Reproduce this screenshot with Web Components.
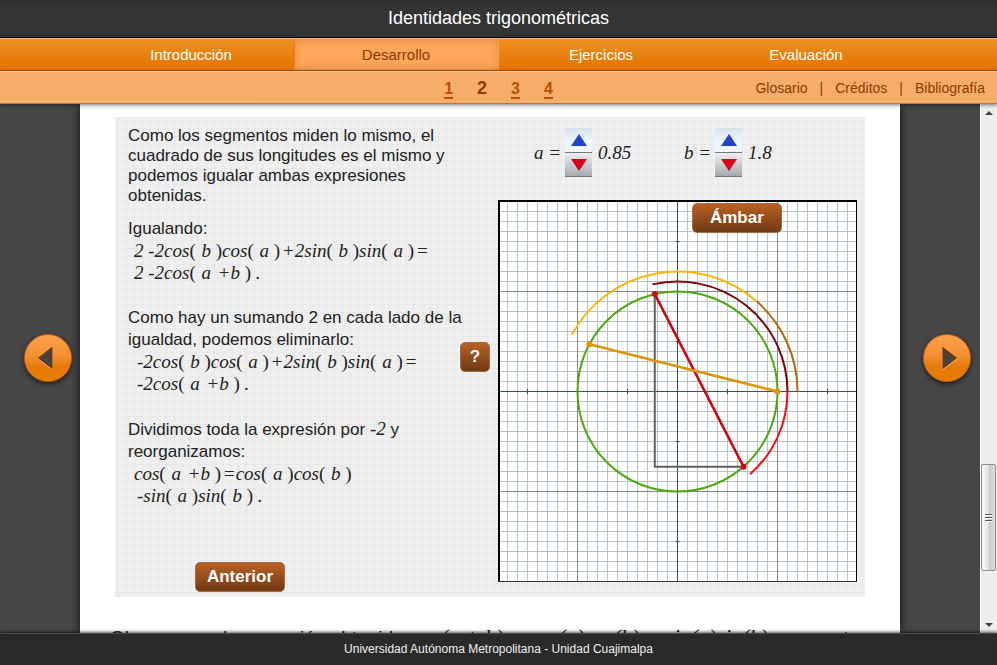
<!DOCTYPE html>
<html lang="es">
<head>
<meta charset="utf-8">
<title>Identidades trigonométricas</title>
<style>
html, body { height: 100%; margin: 0; }
body { font-family: "Liberation Sans", Arial, sans-serif; font-size: 17px; color: #222; overflow: hidden; }
</style>
</head>
<body>
<lesson-app>
  <top-title slot="head">Identidades trigonométricas</top-title>
  <main-nav slot="head"></main-nav>
  <sub-nav slot="head"></sub-nav>
  <turn-button slot="prev" direction="prev"></turn-button>
  <turn-button slot="next" direction="next"></turn-button>
  <lesson-scene></lesson-scene>
  <closing-line></closing-line>
  <side-scroll slot="scroll"></side-scroll>
  <page-footer slot="foot">Universidad Autónoma Metropolitana - Unidad Cuajimalpa</page-footer>
</lesson-app>

<script>
const define = (name, html, setup) => {
  const tpl = document.createElement('template');
  tpl.innerHTML = '<style>:host,*{box-sizing:border-box}</style>' + html.trim();
  customElements.define(name, class extends HTMLElement {
    constructor() {
      super();
      this.attachShadow({ mode: 'open' }).append(tpl.content.cloneNode(true));
    }
    connectedCallback() { if (setup) setup(this, this.shadowRoot); }
  });
};

define('top-title', `
<style>
:host { display: block; background: linear-gradient(#2d2d2d, #343434 20%, #333); border-bottom: 1px solid #000; padding: 7px 0 8px; text-align: center; }
h1 { margin: 0; font-size: 18px; line-height: 22px; font-weight: 400; color: #fff; }
</style>
<h1><slot></slot></h1>`);

define('main-nav', `
<style>
:host { display: block; background: linear-gradient(#f09020, #e6800f 55%, #e87400); border-top: 1px solid #ffb46a; border-bottom: 1px solid #b85000; }
nav { max-width: 820px; margin: 0 auto; display: flex; }
a { flex: 1; text-align: center; color: #fff; text-decoration: none; font-size: 15px; line-height: 31px; }
a[aria-current] { color: #8e3b00; background: #fca75c; box-shadow: inset 0 0 10px #e8883a, inset 1px 0 #e07a10, inset -1px 0 #ffc080; }
</style>
<nav><a href="#intro">Introducción</a><a href="#desarrollo" aria-current="page">Desarrollo</a><a href="#ejercicios">Ejercicios</a><a href="#evaluacion">Evaluación</a></nav>`);

define('sub-nav', `
<style>
:host { display: grid; grid-template-columns: 1fr auto 1fr; align-items: center; height: 33px; padding: 0 12px;
  background: repeating-linear-gradient(90deg, #f3aa6808 0 2px, #e08a3c10 2px 4px), #f6ae6d;
  border-top: 1px solid #ffc793; border-bottom: 1px solid #b87a44; box-shadow: 0 1px 4px #0008; position: relative; z-index: 1; }
.pages { grid-column: 2; display: flex; gap: 24px; align-items: baseline; font-weight: 700; font-size: 16px; padding-top: 3px; }
.pages a { color: #bd5000; text-decoration: none; line-height: 17px; border-bottom: 2px solid #bd5000; }
.pages a[aria-current] { color: #8e3b00; font-size: 18px; border: 0; }
.links { justify-self: end; display: flex; gap: 12px; font-size: 14px; line-height: 18px; color: #8e3b00; }
.links a { color: #8e3b00; text-decoration: none; }
</style>
<nav class="pages"><a href="#1">1</a><a href="#2" aria-current="page">2</a><a href="#3">3</a><a href="#4">4</a></nav>
<nav class="links"><a href="#glosario">Glosario</a><span>|</span><a href="#creditos">Créditos</a><span>|</span><a href="#bibliografia">Bibliografía</a></nav>`);

define('page-footer', `
<style>
:host { display: block; background: #2a2a2a; border-top: 1px solid #4a4a4a; box-shadow: 0 -1px 3px #000a; position: relative; z-index: 1;
  text-align: center; font-size: 12px; line-height: 31px; color: #eee; }
</style>
<footer><slot></slot></footer>`);

define('turn-button', `
<style>
:host { display: block; }
button { display: grid; place-items: center; width: 48px; height: 48px; padding: 0; border: 1px solid #c06010; border-radius: 50%;
  background: linear-gradient(#ffa04c, #f39032 45%, #e67a08 70%, #ea7c00); box-shadow: 0 2px 4px #0009; }
svg { display: block; filter: drop-shadow(0 1px 0 #ffb060); }
:host([direction="next"]) svg { transform: scaleX(-1); }
</style>
<button type="button"><svg width="24" height="24" viewBox="0 0 24 24"><path d="M2.500 12 16 1.500V22.500Z" fill="#4a4238" stroke="#6b3a0c"/></svg></button>`,
(host, root) => root.querySelector('button').setAttribute('aria-label', host.getAttribute('direction') === 'prev' ? 'Página anterior' : 'Página siguiente'));

define('side-scroll', `
<style>
:host { display: block; width: 17px; background: #eee; border-left: 1px solid #fff; }
div.bar { height: 100%; display: grid; grid-template-rows: 17px 343fr 107fr 45fr 17px; }
.up, .down { place-self: center; border: 4px solid transparent; border-top: 0; border-bottom: 4px solid #444; }
.down { grid-row: 5; border-top: 4px solid #444; border-bottom: 0; }
.thumb { grid-row: 3; border: 1px solid #8c8c8c; border-radius: 2px; margin-right: 1px; background: linear-gradient(90deg, #f8f8f8, #e6e6e8 45%, #c8c8d0 55%, #dcdce2); display: grid; place-items: center; }
.grip { width: 7px; height: 8px; background: repeating-linear-gradient(#555 0 1px, #fff 1px 2px, transparent 2px 3px); }
</style>
<div class="bar"><span class="up"></span><div class="thumb"><span class="grip"></span></div><span class="down"></span></div>`);

define('brown-button', `
<style>
:host { display: inline-block; }
button { display: block; min-width: 30px; width: 100%; height: 30px; padding: 0; border: 1px solid #a86a42; border-radius: 5px;
  background: linear-gradient(#b96024, #703a14); color: #fff; font: 700 17px/26px "Liberation Sans", Arial, sans-serif; }
</style>
<button type="button"><slot></slot></button>`);

define('math-text', `
<style>
:host { font: italic 19px/22px "Liberation Serif", "Times New Roman", serif; white-space: pre; }
b { font-weight: inherit; }
span { font-style: normal; }
span.open { margin-right: 1px; }
span.op { margin: 0 1px 0 3px; }
</style><b></b>`,
(host, root) => {
  root.querySelector('b').replaceChildren(...(host.getAttribute('value') || '').split(/([()+=])/).filter(Boolean).map(part => {
    if (!/^[()+=]$/.test(part)) return document.createTextNode(part);
    const s = document.createElement('span');
    s.textContent = part;
    if (/[+=]/.test(part)) s.className = 'op';
    if (part === '(') s.className = 'open';
    return s;
  }));
});

define('value-spinner', `
<style>
:host { display: flex; align-items: center; width: 150px; font: italic 19px/22px "Liberation Serif", serif; }
.box { width: 27px; margin: 0 6px 0 4px; }
button { display: grid; place-items: center; width: 100%; height: 25px; border: 0; border-bottom: 1px solid #777; padding: 0; background: linear-gradient(#dbe2ec, #f0f6ff 60%); }
.dn { height: 24px; background: linear-gradient(#eeeef2, #a6aaae); }
svg { display: block; }
.name { width: 27px; white-space: nowrap; }
</style>
<span class="name"></span>
<div class="box">
<button type="button" class="up"><svg width="16" height="12" viewBox="0 0 16 12"><path d="M8 0 16 12H0Z" fill="#2244cc"/></svg></button>
<button type="button" class="dn"><svg width="16" height="12" viewBox="0 0 16 12"><path d="M8 12 16 0H0Z" fill="#d8001c"/></svg></button>
</div><output></output>`,
(host, root) => {
  const n = host.getAttribute('name');
  root.querySelector('.name').textContent = n + ' =';
  root.querySelector('output').textContent = host.getAttribute('value');
  root.querySelector('.up').setAttribute('aria-label', 'Aumentar ' + n);
  root.querySelector('.dn').setAttribute('aria-label', 'Disminuir ' + n);
});

define('circle-plot', `
<style>
:host { display: block; position: relative; }
svg { display: block; width: 100%; height: auto; }
::slotted(brown-button) { position: absolute; left: 54%; top: 3px; width: 90px; }
</style>
<svg viewBox="0 0 359 382" role="img" aria-label="Círculo unitario"></svg><slot></slot>`,
(host, root) => {
  const a = +host.getAttribute('a'), b = +host.getAttribute('b');
  const cx = 179.5, cy = 191.5;
  const pt = (r, t) => (cx + r * Math.cos(t)).toFixed(2) + ' ' + (cy - r * Math.sin(t)).toFixed(2);
  const arc = (r, from, to, color) => `<path d="M${pt(r, from)}A${r} ${r} 0 0 ${to > from ? 0 : 1} ${pt(r, to)}" fill="none" stroke="${color}" stroke-width="2"/>`;
  const dot = (t, color) => { const [x, y] = pt(100, t).split(' '); return `<circle cx="${x}" cy="${y}" r="3" fill="${color}"/>`; };
  let s = '<rect width="359" height="382" fill="#fff"/>';
  const line = (d, c) => `<path d="${d}" stroke="${c}" fill="none"/>`;
  let minor = '', major = '', axis = `M${cx} 0V382M0 ${cy}H359`;
  for (let k = -19; k <= 19; k++) {
    if (!k) continue;
    const x = cx + 10 * k, y = cy + 10 * k, big = k % 10 === 0;
    if (x > 0 && x < 359) { const d = `M${x} 0V382`; big ? major += d : minor += d; }
    const d = `M0 ${y}H359`;
    big ? major += d : minor += d;
    if (k % 5 === 0) axis += `M${x} ${cy - 2.5}v5M${cx - 2} ${y}h4`;
  }
  s += line(minor, '#b6c2c5') + line(major, '#7e8a8c') + line(axis, '#3c5058');
  s += `<circle cx="${cx}" cy="${cy}" r="100" fill="none" stroke="#4ca80c" stroke-width="2"/>`;
  s += arc(120, 0, a, '#b4690c') + arc(120, a, a + b, '#ffb40c') + arc(110, 0, b, '#80000a') + arc(110, 0, -a, '#ff0a0a');
  s += dot(b, '#d4000c') + dot(-a, '#d4000c');
  const x1 = cx + 100 * Math.cos(b), y2 = cy + 100 * Math.sin(a);
  s += `<path d="M${pt(100, b)}L${x1} ${y2}L${pt(100, -a)}" fill="none" stroke="#606060" stroke-width="2"/>`;
  s += `<path d="M${pt(100, b)}L${pt(100, -a)}" stroke="#d4000c" stroke-width="2.500"/>`;
  s += `<path d="M${pt(100, 0)}L${pt(100, a + b)}" stroke="#dc9408" stroke-width="2.500"/>` + dot(0, '#dc9408') + dot(a + b, '#dc9408');
  s += '<path d="M0 1H359M1 0V382" stroke="#000" stroke-width="2"/><path d="M358.500 0V382" stroke="#000"/><path d="M0 381.500H359" stroke="#333"/>';
  root.querySelector('svg').innerHTML = s;
});

define('lesson-scene', `
<style>
:host { display: grid; grid-template-columns: minmax(0, 1fr) 30px 359px; gap: 8px; padding: 8px 8px 15px 13px;
  background: repeating-linear-gradient(90deg, #0000 0 3px, #00000006 3px 4px, #0000 4px 7px, #ffffff30 7px 8px), repeating-linear-gradient(#0000 0 3px, #00000006 3px 4px, #0000 4px 8px), #eee; }
.text { display: flex; flex-direction: column; }
p { margin: 0 0 23px; line-height: 22px; white-space: nowrap; }
p.first { line-height: 20px; margin-bottom: 12px; padding-top: 1px; }
math-text.line { display: block; padding-left: 6px; }
math-text.neg { padding-left: 9px; }
.back { width: 90px; margin: auto 0 -10px 67px; }
.help { align-self: center; margin-top: 6px; }
.controls { display: flex; padding: 3px 0 23px 36px; }
</style>
<div class="text">
<p class="first">Como los segmentos miden lo mismo, el<br>cuadrado de sus longitudes es el mismo y<br>podemos igualar ambas expresiones<br>obtenidas.</p>
<p>Igualando:<math-text class="line" value="2 -2cos( b )cos( a )+2sin( b )sin( a )="></math-text><math-text class="line" value="2 -2cos( a +b ) ."></math-text></p>
<p>Como hay un sumando 2 en cada lado de la<br>igualdad, podemos eliminarlo:<math-text class="line neg" value="-2cos( b )cos( a )+2sin( b )sin( a )="></math-text><math-text class="line neg" value="-2cos( a +b ) ."></math-text></p>
<p>Dividimos toda la expresión por <math-text value="-2"></math-text> y<br>reorganizamos:<math-text class="line" value="cos( a +b )=cos( a )cos( b )"></math-text><math-text class="line neg" value="-sin( a )sin( b ) ."></math-text></p>
<brown-button class="back">Anterior</brown-button>
</div>
<brown-button class="help">?</brown-button>
<div>
<div class="controls"><value-spinner name="a" value="0.85"></value-spinner><value-spinner name="b" value="1.8"></value-spinner></div>
<circle-plot a="0.85" b="1.8"><brown-button>Ámbar</brown-button></circle-plot>
</div>`);

define('closing-line', `
<style>
:host { display: block; margin: 26px -20px 0 -5px; white-space: nowrap; font-size: 19px; line-height: 28px; }
i { font: italic 22px/28px "Liberation Serif", serif; margin: 0 8px; }
</style>
Observamos la expresión obtenida<i>cos(a + b) = cos(a)cos(b) − sin(a)sin(b)</i>en nuestra`);

define('lesson-app', `
<style>
:host { display: flex; flex-direction: column; height: 100vh; }
.mid { flex: 1; min-height: 0; display: flex; background: #464646; }
.stage { flex: 1; min-width: 0; display: grid; grid-template-columns: minmax(72px, 1fr) minmax(0, 820px) minmax(72px, 1fr); overflow: hidden; }
.side { display: flex; align-items: center; justify-content: flex-end; padding: 0 8px 22px 0; }
.side.r { justify-content: flex-start; padding: 0 0 22px 23px; }
.sheet { background: #fff; box-shadow: 0 0 9px #000c; padding: 13px 35px 0; overflow: hidden; }
</style>
<header><slot name="head"></slot></header>
<div class="mid"><div class="stage"><div class="side"><slot name="prev"></slot></div><main class="sheet"><slot></slot></main><div class="side r"><slot name="next"></slot></div></div><slot name="scroll"></slot></div>
<slot name="foot"></slot>`);
</script>
</body>
</html>
